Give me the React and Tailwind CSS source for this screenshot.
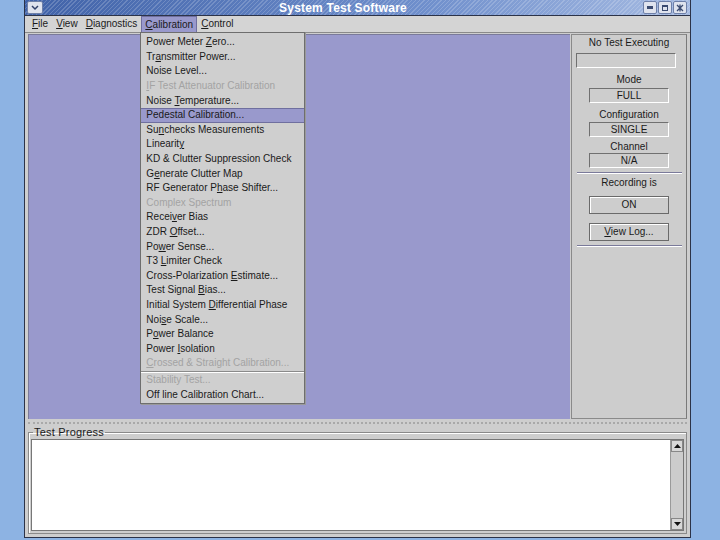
import React from "react";

const menuItems = [
  { label: "Power Meter Zero...", u: 12 },
  { label: "Transmitter Power...", u: 2 },
  { label: "Noise Level..." },
  { label: "IF Test Attenuator Calibration", disabled: true, u: 0 },
  { label: "Noise Temperature...", u: 6 },
  { label: "Pedestal Calibration...", active: true },
  { label: "Sunchecks Measurements", u: 2 },
  { label: "Linearity", u: 8 },
  { label: "KD & Clutter Suppression Check" },
  { label: "Generate Clutter Map", u: 1 },
  { label: "RF Generator Phase Shifter...", u: 14 },
  { label: "Complex Spectrum", disabled: true },
  { label: "Receiver Bias", u: 5 },
  { label: "ZDR Offset...", u: 4 },
  { label: "Power Sense...", u: 2 },
  { label: "T3 Limiter Check", u: 3 },
  { label: "Cross-Polarization Estimate...", u: 19 },
  { label: "Test Signal Bias...", u: 12 },
  { label: "Initial System Differential Phase", u: 15 },
  { label: "Noise Scale...", u: 3 },
  { label: "Power Balance", u: 1 },
  { label: "Power Isolation", u: 6 },
  { label: "Crossed & Straight Calibration...", disabled: true, u: 0 },
  { sep: true },
  { label: "Stability Test...", disabled: true },
  { label: "Off line Calibration Chart..." },
];

const Mnemonic = ({ text, u }) => {
  if (u === undefined) return <span>{text}</span>;
  return (
    <span>
      {text.slice(0, u)}
      <span className="underline underline-offset-1">{text[u]}</span>
      {text.slice(u + 1)}
    </span>
  );
};

const StatusBox = ({ children, wide }) => (
  <div
    className={`${wide ? "w-[100px]" : "w-[80px]"} h-[15px] flex items-center justify-center border border-t-[#707070] border-l-[#707070] border-b-white border-r-white bg-[#cdcdcd] text-[10px] leading-none`}
  >
    {children}
  </div>
);

const PanelButton = ({ children }) => (
  <div className="w-[80px] h-[18px] border border-[#6a6a6a] bg-[#cdcdcd] shadow-[inset_1px_1px_0_#ffffff] flex items-center justify-center text-[10px] leading-none">
    {children}
  </div>
);

const Separator = () => (
  <div className="w-[105px] border-t border-t-[#7a7a9a] border-b border-b-white" />
);

const TitleButton = ({ children }) => (
  <div className="w-[14px] h-[13px] rounded-[2px] border border-[#6d7fa8] bg-[#dfe3ee] flex items-center justify-center">
    {children}
  </div>
);

export default function App() {
  return (
    <div className="w-[720px] h-[540px] bg-[#8db3e3] pl-[24px] pr-[29px] pb-[2px] font-['Liberation_Sans',Arial,sans-serif] text-[#1a1a1a] overflow-hidden">
      <div className="h-full flex flex-col border-x border-b border-[#2c3348] bg-[#cecece]">
        {/* Title bar */}
        <div className="h-[16px] shrink-0 flex items-center px-[2px] bg-[image:repeating-linear-gradient(135deg,rgba(255,255,255,0.18)_0px,rgba(255,255,255,0.18)_1px,transparent_1px,transparent_3px),linear-gradient(to_right,#4062a8,#6f8fcc_60%,#a6bbe2)] border-b border-[#2c3348]">
          <div className="w-[16px] h-[13px] rounded-[2px] border border-[#6d7fa8] bg-[#dfe3ee] flex items-center justify-center">
            <svg width="8" height="6" viewBox="0 0 8 6">
              <path d="M1 1 L4 4 L7 1" stroke="#30406a" strokeWidth="1.5" fill="none" />
            </svg>
          </div>
          <div className="flex-1 flex items-center justify-center text-white font-bold text-[12px] leading-none tracking-[0.2px]">
            System Test Software
          </div>
          <div className="flex gap-[1px] pr-[1px]">
            <TitleButton>
              <div className="w-[6px] h-[3px] bg-[#3a4a70]" />
            </TitleButton>
            <TitleButton>
              <div className="w-[6px] h-[6px] border border-[#3a4a70] border-t-2" />
            </TitleButton>
            <TitleButton>
              <svg width="8" height="8" viewBox="0 0 8 8">
                <path d="M1 1 L7 7 M7 1 L1 7 M4 0.5 V7.5" stroke="#3a4a70" strokeWidth="1.3" />
              </svg>
            </TitleButton>
          </div>
        </div>

        {/* Menu bar */}
        <div className="h-[16px] shrink-0 flex items-stretch pl-[3px] bg-[#d4d4d4] text-[10px] leading-none">
          <div className="px-[4px] flex items-center"><Mnemonic text="File" u={0} /></div>
          <div className="px-[4px] flex items-center"><Mnemonic text="View" u={0} /></div>
          <div className="px-[4px] flex items-center"><Mnemonic text="Diagnostics" u={0} /></div>
          <div className="relative px-[3px] flex items-center bg-[#9999cc] border border-[#6f6f9f] border-b-0">
            <Mnemonic text="Calibration" u={0} />
            {/* Dropdown */}
            <div className="absolute left-[-2px] top-[15px] w-[165px] z-10 bg-[#cfcfcf] border border-[#6e6e6e] pt-[2px] pb-[1px] shadow-[1px_1px_0_#9a9a9a]">
              {menuItems.map((item, i) =>
                item.sep ? (
                  <div key={i} className="border-t border-[#8a8a8a] border-b border-b-white" />
                ) : (
                  <div
                    key={i}
                    className={`h-[14.6px] flex items-center pl-[5px] whitespace-nowrap text-[10px] leading-none ${
                      item.active ? "bg-[#9999cc] border-y border-[#6f6f9f]" : ""
                    } ${item.disabled ? "text-[#a3a3a3]" : "text-[#1a1a1a]"}`}
                  >
                    <Mnemonic text={item.label} u={item.u} />
                  </div>
                )
              )}
            </div>
          </div>
          <div className="px-[4px] flex items-center"><Mnemonic text="Control" u={0} /></div>
        </div>

        {/* Main area */}
        <div className="flex-1 flex gap-[1px] px-[3px] pt-[1px] border-t border-[#8a8a8a] min-h-0">
          <div className="flex-1 bg-[#9999cc] border-l border-t border-[#7a7a9a]" />
          <div className="w-[116px] border border-[#8a8a8a] border-r-[#7a7a7a] bg-[#cdcdcd] flex flex-col items-center text-[10px] leading-none pt-[2px]">
            <div className="h-[12px] flex items-center">No Test Executing</div>
            <div className="mt-[4px] mr-[6px]">
              <StatusBox wide />
            </div>
            <div className="mt-[6px] h-[12px] flex items-center">Mode</div>
            <div className="mt-[2px]"><StatusBox>FULL</StatusBox></div>
            <div className="mt-[6px] h-[12px] flex items-center">Configuration</div>
            <div className="mt-[1px]"><StatusBox>SINGLE</StatusBox></div>
            <div className="mt-[4px] h-[12px] flex items-center">Channel</div>
            <div className="mt-[0px]"><StatusBox>N/A</StatusBox></div>
            <div className="mt-[4px]"><Separator /></div>
            <div className="mt-[3px] h-[12px] flex items-center">Recording is</div>
            <div className="mt-[7px]"><PanelButton>ON</PanelButton></div>
            <div className="mt-[9px]"><PanelButton><span><span className="underline underline-offset-1">V</span>iew Log...</span></PanelButton></div>
            <div className="mt-[4px]"><Separator /></div>
          </div>
        </div>

        {/* Splitter */}
        <div className="h-[8px] shrink-0 flex items-center px-[3px]">
          <div className="w-full border-t-2 border-dotted border-[#a9a9a9]" />
        </div>

        {/* Test Progress */}
        <div className="h-[110px] shrink-0 px-[3px] pb-[3px]">
          <fieldset className="h-full border border-[#8a8a8a] shadow-[inset_1px_1px_0_#ffffff] px-[2px] pb-[1px] m-0">
            <legend className="ml-[2px] px-[1px] text-[11px] leading-none tracking-[0.2px] text-[#1a1a1a]">
              Test Progress
            </legend>
            <div className="h-[92px] mt-[1px] flex border border-[#777777] bg-white">
              <div className="flex-1" />
              <div className="w-[13px] bg-[#cccccc] border-l border-[#9a9a9a] flex flex-col justify-between">
                <div className="h-[12px] border border-[#888] bg-[#d8d8d8] flex items-center justify-center">
                  <svg width="7" height="4" viewBox="0 0 7 4">
                    <path d="M0 4 L3.5 0 L7 4 Z" fill="#111" />
                  </svg>
                </div>
                <div className="h-[12px] border border-[#888] bg-[#d8d8d8] flex items-center justify-center">
                  <svg width="7" height="4" viewBox="0 0 7 4">
                    <path d="M0 0 L3.5 4 L7 0 Z" fill="#111" />
                  </svg>
                </div>
              </div>
            </div>
          </fieldset>
        </div>
      </div>
    </div>
  );
}
